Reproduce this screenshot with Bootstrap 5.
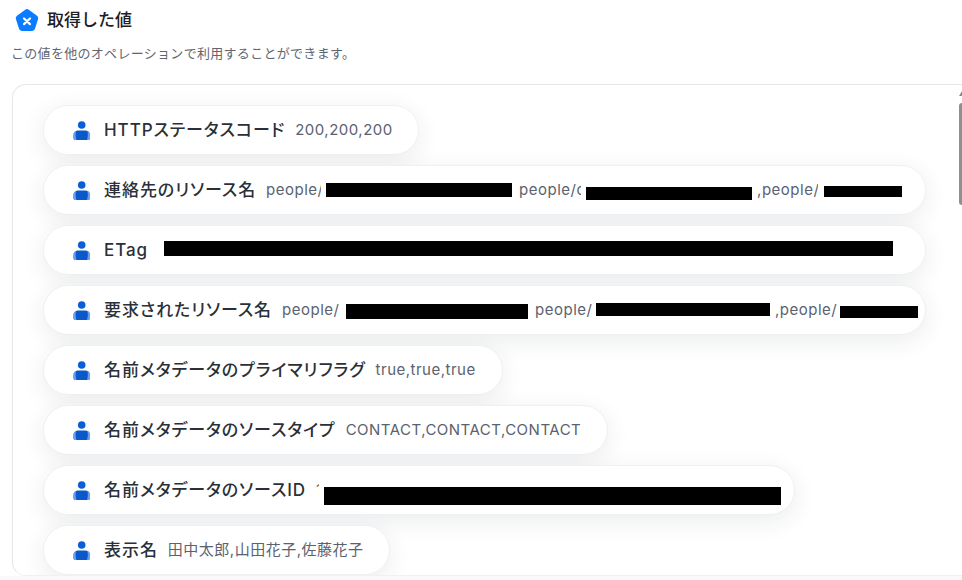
<!DOCTYPE html>
<html lang="ja">
<head>
  <meta charset="UTF-8" />
  <title>取得した値</title>
  <link href="https://cdn.jsdelivr.net/npm/bootstrap@5.3.0/dist/css/bootstrap.min.css" rel="stylesheet"/>
  <style>
    html, body { height: 100%; overflow: hidden; }
    body {
      font-family: Inter, "Noto Sans CJK JP", sans-serif;
      background: #f9f9fa;
      color: #283142;
    }
    .page-top { height: 576px; background: #fff; padding-left: 12px; }
    .head-row { height: 41px; padding-left: 2px; }
    .head-title { font-size: 17px; font-weight: 500; color: #1d2026; margin: 0 0 0 7px; }
    .head-note { font-size: 13px; letter-spacing: .3px; color: #5f6670; margin: 0 0 0 -1px; height: 43px; padding-top: 2px; line-height: 20px; }
    .value-panel {
      height: 492px;
      margin-right: -20px;
      border: 1px solid #e4e6ea;
      border-bottom-color: #f0f1f3;
      border-radius: 14px;
      padding: 20px 0 0 30px;
      gap: 10px;
      overflow: hidden;
    }
    .value-pill {
      height: 50px;
      flex: none;
      background: #fff;
      border: 1px solid #eef0f3;
      border-radius: 25px;
      padding-left: 29px;
      box-shadow: 0 6px 24px rgba(30, 40, 60, .09);
      white-space: nowrap;
      overflow: hidden;
    }
    .pill-wide { width: 883px; }
    .pill-status { width: 376px; }
    .pill-flag { width: 460px; }
    .pill-type { width: 565px; }
    .pill-id { width: 752px; }
    .pill-name { width: 347px; }
    .pill-icon { flex: none; margin-right: 13px; }
    .value-key { font-size: 17px; letter-spacing: .95px; font-feature-settings: "palt"; font-weight: 500; color: #2b2f38; margin-right: 10px; padding-top: 1px; }
    .value-text { font-size: 15px; color: #5a6270; letter-spacing: .5px; padding-top: 1px; }
    .masked { display: inline-block; flex: none; background: #000; align-self: flex-start; }
    .scroll-track { width: 3px; right: 0; top: 84px; bottom: 0; overflow: hidden; }
    .scroll-arrow { width: 0; height: 0; border-left: 3px solid transparent; border-right: 3px solid transparent; border-bottom: 5px solid #8a8a8a; margin: 7px 0 7px; }
    .scroll-thumb { height: 102px; background: #8f8f8f; border-radius: 3px 0 0 3px; }

    /* values cut off by the masks */
    .cut-a, .cut-b, .cut-c, .cut-d, .cut-e, .cut-f, .cut-id { overflow: hidden; flex: none; }
    .cut-a { width: 55px; }
    .cut-b { width: 62px; }
    .cut-c { width: 61px; }
    .cut-d { width: 59px; }
    .cut-e { width: 57px; }
    .cut-f { width: 62px; }
    .cut-id { width: 3px; }

    .m-etag { width: 729px; height: 15px; margin: 15px 0 0 6px; }
    .m2a { width: 186px; height: 14px; margin: 17px 7px 0 5px; }
    .m2b { width: 166px; height: 13px; margin: 21px 5px 0 5px; }
    .m2c { width: 78px; height: 11px; margin: 20px 0 0 6px; }
    .m4a { width: 182px; height: 15px; margin: 18px 7px 0 5px; }
    .m4b { width: 174px; height: 13px; margin: 17px 5px 0 4px; }
    .m4c { width: 78px; height: 12px; margin: 20px 0 0 3px; }
    .m-id { width: 457px; height: 18px; margin: 21px 0 0 5px; }
  </style>
</head>
<body>

  <svg width="0" height="0" class="position-absolute">
    <symbol id="person" viewBox="0 0 18 22">
      <circle cx="8.700" cy="6" r="3.800" fill="#0b5ed7"/>
      <path d="M.5 19v-3C.5 13 3 11.500 5.500 11.500h6.500C15 11.500 17 13 17 16v3c0 1.500-1 2-2 2H2.500c-1 0-2-.5-2-2z" fill="#0a58ca"/>
      <path d="M.5 16C.5 14 1.500 12.500 3 12c-.5 3-.5 6 .5 9h-1c-1 0-2-.5-2-2z" fill="#6b9ff0"/>
      <path d="M17 16c0-2-1-3.500-2.500-4 .5 3 .5 6-.5 9h1c1 0 2-.5 2-2z" fill="#6b9ff0"/>
    </symbol>
  </svg>

  <div class="page-top">
    <div class="d-flex align-items-center head-row">
      <svg width="26" height="26" viewBox="0 0 26 26">
        <path d="M11.200 1.700a3 3 0 0 1 3.600 0l8.200 6a3 3 0 0 1 1.100 3.400l-3.100 9.700a3 3 0 0 1-2.900 2.100H7.900A3 3 0 0 1 5 20.800L1.900 11.100A3 3 0 0 1 3 7.700z" fill="#0a7cff"/>
        <path d="M10 10.500l6 5.600M16 10.500l-6 5.600" stroke="#fff" stroke-width="2.200" stroke-linecap="round"/>
      </svg>
      <h1 class="head-title">取得した値</h1>
    </div>
    <p class="head-note">この値を他のオペレーションで利用することができます。</p>

    <div class="value-panel d-flex flex-column">
      <div class="value-pill pill-status d-flex align-items-center">
        <svg class="pill-icon" width="18" height="22"><use href="#person"/></svg>
        <span class="value-key">HTTPステータスコード</span>
        <span class="value-text">200,200,200</span>
      </div>
      <div class="value-pill pill-wide d-flex align-items-center">
        <svg class="pill-icon" width="18" height="22"><use href="#person"/></svg>
        <span class="value-key">連絡先のリソース名</span>
        <span class="value-text cut-a">people/</span>
        <span class="masked m2a"></span>
        <span class="value-text cut-b">people/c</span>
        <span class="masked m2b"></span>
        <span class="value-text cut-c">,people/</span>
        <span class="masked m2c"></span>
      </div>
      <div class="value-pill pill-wide d-flex align-items-center">
        <svg class="pill-icon" width="18" height="22"><use href="#person"/></svg>
        <span class="value-key">ETag</span>
        <span class="masked m-etag"></span>
      </div>
      <div class="value-pill pill-wide d-flex align-items-center">
        <svg class="pill-icon" width="18" height="22"><use href="#person"/></svg>
        <span class="value-key">要求されたリソース名</span>
        <span class="value-text cut-d">people/</span>
        <span class="masked m4a"></span>
        <span class="value-text cut-e">people/</span>
        <span class="masked m4b"></span>
        <span class="value-text cut-f">,people/</span>
        <span class="masked m4c"></span>
      </div>
      <div class="value-pill pill-flag d-flex align-items-center">
        <svg class="pill-icon" width="18" height="22"><use href="#person"/></svg>
        <span class="value-key">名前メタデータのプライマリフラグ</span>
        <span class="value-text">true,true,true</span>
      </div>
      <div class="value-pill pill-type d-flex align-items-center">
        <svg class="pill-icon" width="18" height="22"><use href="#person"/></svg>
        <span class="value-key">名前メタデータのソースタイプ</span>
        <span class="value-text">CONTACT,CONTACT,CONTACT</span>
      </div>
      <div class="value-pill pill-id d-flex align-items-center">
        <svg class="pill-icon" width="18" height="22"><use href="#person"/></svg>
        <span class="value-key">名前メタデータのソースID</span>
        <span class="value-text cut-id">1</span>
        <span class="masked m-id"></span>
      </div>
      <div class="value-pill pill-name d-flex align-items-center">
        <svg class="pill-icon" width="18" height="22"><use href="#person"/></svg>
        <span class="value-key">表示名</span>
        <span class="value-text">田中太郎,山田花子,佐藤花子</span>
      </div>
    </div>
  </div>

  <div class="scroll-track position-absolute">
    <div class="scroll-arrow"></div>
    <div class="scroll-thumb"></div>
  </div>

</body>
</html>
